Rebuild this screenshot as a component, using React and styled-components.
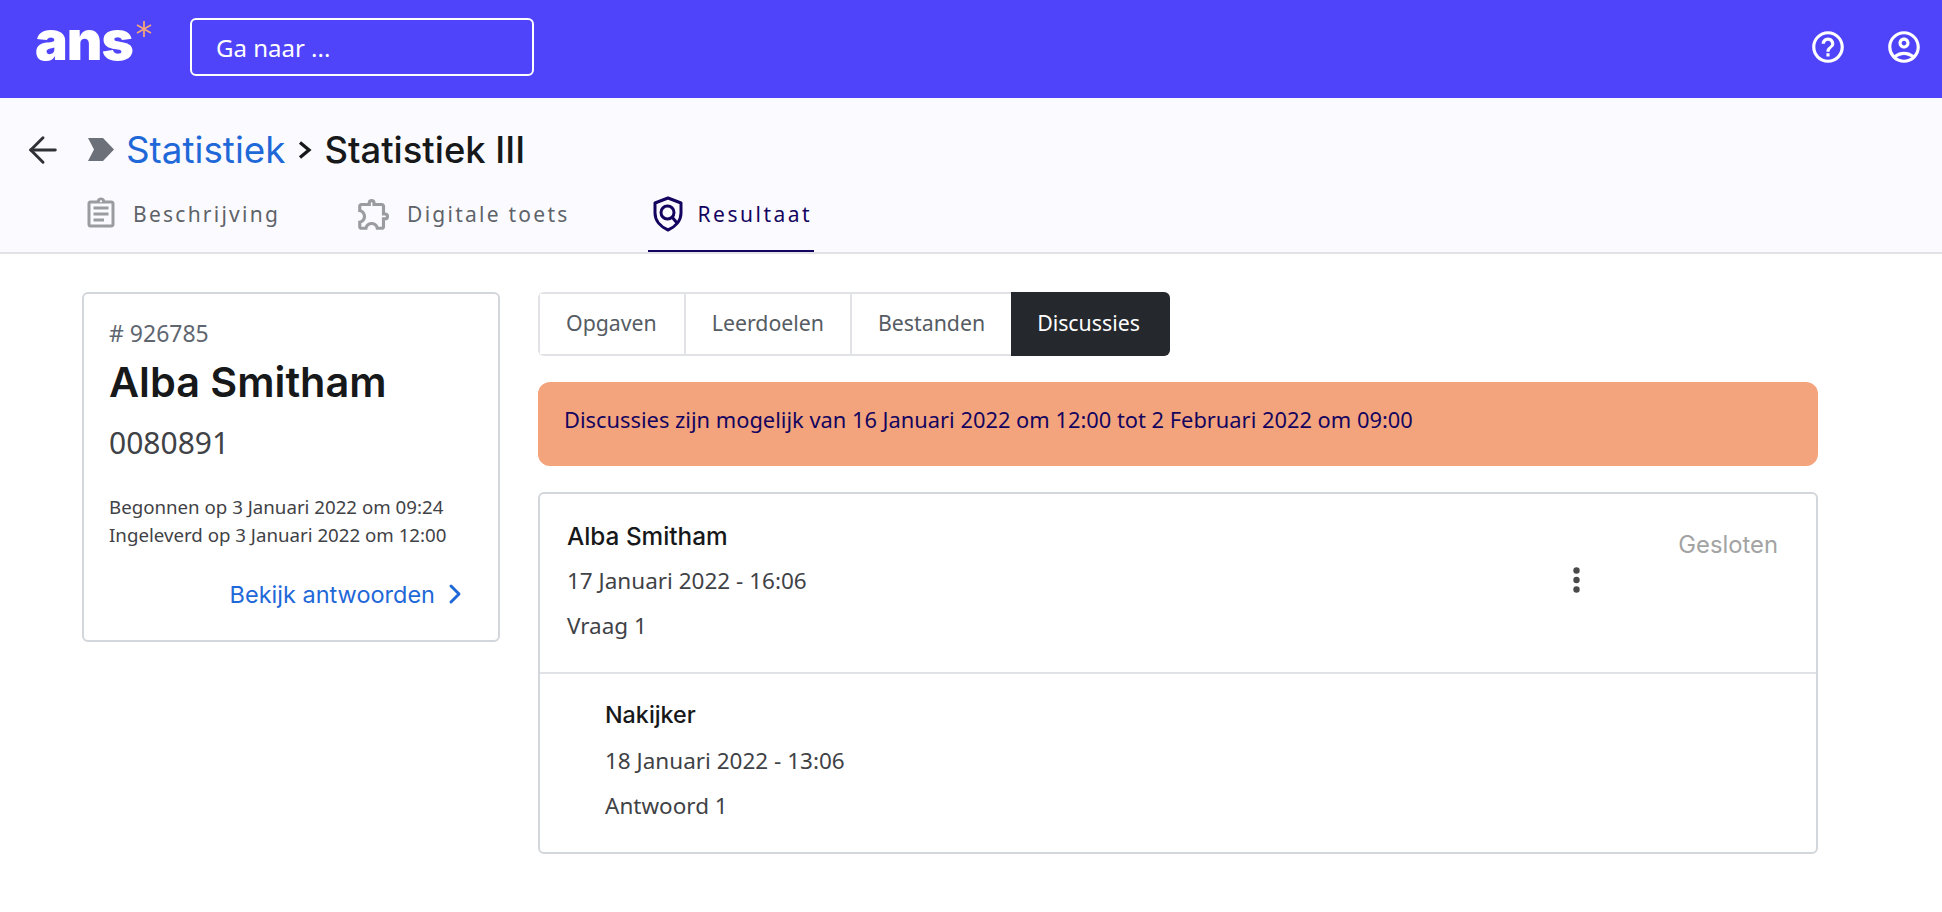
import styled, { createGlobalStyle } from "styled-components";
import { ArrowLeft, ChevronRight } from "lucide-react";
import {
  MdHelpOutline,
  MdOutlineAccountCircle,
  MdOutlineAssignment,
  MdOutlineExtension,
} from "react-icons/md";

const GlobalStyle = createGlobalStyle`
  * { box-sizing: border-box; }
  html, body { margin: 0; background: #fff; }
  body { font-family: "Noto Sans", "Open Sans", sans-serif; color: #3f4246; }
`;

const heading = `"Inter", "Liberation Sans", sans-serif`;

const TopBar = styled.header`
  height: 98px;
  background: #4f44fa;
  display: flex;
  align-items: center;
  padding: 0 19px 4px 35px;
`;

const Logo = styled.div`
  width: 155px;
  height: 58px;
  display: flex;
  align-items: flex-start;
  color: #fff;
  font-family: ${heading};
  font-weight: 900;
  font-size: 55px;
  line-height: 44px;
  letter-spacing: -1px;
`;

const LogoStar = styled.svg`
  margin: 3px 0 0 3px;
`;

const SearchBox = styled.div`
  width: 344px;
  height: 58px;
  border: 2px solid #fff;
  border-radius: 6px;
  color: #fff;
  font-size: 24px;
  display: flex;
  align-items: center;
  padding-left: 24px;
`;

const TopIcons = styled.div`
  margin-left: auto;
  display: flex;
  gap: 38px;
  color: #fff;
`;

const SubHeader = styled.div`
  height: 156px;
  background: #fbfbff;
  border-bottom: 2px solid #e1e2e6;
  padding: 30px 0 0 22px;
`;

const TitleRow = styled.div`
  display: flex;
  align-items: center;
  height: 42px;
  padding-top: 1px;
  color: #2f3136;
`;

const CrumbMark = styled.svg`
  margin: 0 12px 0 23px;
`;

const CrumbArrow = styled.svg`
  margin: 0 12px 0 13px;
`;

const Crumb = styled.span`
  font-family: ${heading};
  font-weight: ${(p) => (p.$link ? 400 : 500)};
  font-size: ${(p) => (p.$link ? "36.800px" : "36.400px")};
  color: ${(p) => (p.$link ? "#1f68d8" : "#17181a")};
`;

const TabRow = styled.nav`
  display: flex;
  gap: 69px;
  margin: 21px 0 0 57px;
`;

const NavTab = styled.div`
  height: 61px;
  padding: 0 2px 13px 4px;
  margin-right: ${(p) => p.$after || 0}px;
  display: flex;
  align-items: center;
  gap: 14px;
  font-size: 21px;
  letter-spacing: ${(p) => (p.$active ? "2.500px" : "2.250px")};
  color: ${(p) => (p.$active ? "#15045f" : "#5e6369")};
  border-bottom: 2px solid ${(p) => (p.$active ? "#15045f" : "transparent")};
`;

const Content = styled.main`
  display: flex;
  align-items: flex-start;
  gap: 38px;
  padding: 38px 0 0 82px;
`;

const Card = styled.section`
  border: 2px solid #d3d6da;
  border-radius: 6px;
  background: #fff;
`;

const StudentCard = styled(Card)`
  width: 418px;
  height: 350px;
  padding: 24px 25px 0;
`;

const StudentNumber = styled.div`
  font-size: 23px;
  line-height: 30px;
  color: #5f6670;
`;

const StudentName = styled.h2`
  margin: 9px 0 0;
  font-family: ${heading};
  font-weight: 600;
  font-size: 41.400px;
  line-height: 50px;
  color: #17181a;
`;

const StudentCode = styled.div`
  margin-top: 17px;
  font-size: 30px;
  line-height: 38px;
`;

const Dates = styled.div`
  margin-top: 31px;
  font-size: 18.700px;
  line-height: 27.500px;
`;

const AnswersLink = styled.a`
  margin: 30px 2px 0 0;
  display: flex;
  justify-content: flex-end;
  align-items: center;
  gap: 4px;
  font-family: ${heading};
  font-size: 23.500px;
  color: #1f68d8;
`;

const Column = styled.div`
  width: 1280px;
`;

const SegmentGroup = styled.div`
  display: inline-flex;
  height: 64px;
  border: 2px solid #e1e2e6;
  border-radius: 6px;
`;

const Segment = styled.div`
  display: flex;
  align-items: center;
  padding: 0 ${(p) => (p.$active ? "30px 0 26px" : p.$first ? "27px 0 26px" : "26px")};
  padding-bottom: 4px;
  font-size: 21.300px;
  color: ${(p) => (p.$active ? "#fff" : "#565c63")};
  background: ${(p) => (p.$active ? "#25282d" : "#fff")};
  border-left: ${(p) => (p.$first || p.$active ? "0" : "2px solid #e1e2e6")};
  ${(p) => p.$active && "margin: -2px -2px -2px 0; border-radius: 0 6px 6px 0;"}
`;

const Notice = styled.div`
  margin-top: 26px;
  height: 84px;
  background: #f3a47c;
  border-radius: 12px;
  color: #15045f;
  font-size: 21.850px;
  line-height: 76px;
  padding-left: 26px;
`;

const DiscussionCard = styled(Card)`
  margin-top: 26px;
  height: 362px;
`;

const Message = styled.div`
  display: flex;
  align-items: flex-start;
  height: 180px;
  padding: ${(p) => (p.$first ? "27px 38px 0 27px" : "26px 38px 0 65px")};
  border-bottom: ${(p) => (p.$first ? "2px solid #e1e2e6" : "0")};
`;

const MessageBody = styled.div`
  flex: 1;
`;

const Author = styled.div`
  margin-bottom: ${(p) => (p.$first ? -1 : 0)}px;
  font-family: ${heading};
  font-weight: 500;
  font-size: ${(p) => (p.$first ? 24.300 : 23.300)}px;
  line-height: 30px;
  color: #17181a;
`;

const MessageLine = styled.div`
  margin-top: 15.500px;
  font-size: 22.500px;
  line-height: 30px;
`;

const MoreButton = styled.svg`
  margin-top: 46px;
`;

const Status = styled.div`
  width: 198px;
  text-align: right;
  margin-top: 9px;
  font-family: ${heading};
  font-size: 23.800px;
  line-height: 30px;
  color: #a3a3a3;
`;

function ShieldIcon() {
  return (
    <svg width="32" height="36" viewBox="0 0 32 36" fill="none">
      <path
        d="M16 2l13 5v10c0 8-6 14-13 17C9 31 3 25 3 17V7z"
        stroke="#15045f"
        strokeWidth="3"
        strokeLinejoin="round"
      />
      <circle cx="15.500" cy="16.500" r="6.500" stroke="#15045f" strokeWidth="3" />
      <path d="M20 21l5 6" stroke="#15045f" strokeWidth="3" />
    </svg>
  );
}

export default function App() {
  return (
    <>
      <GlobalStyle />
      <TopBar>
        <Logo>
          ans
          <LogoStar width="16" height="16" viewBox="0 0 16 16" stroke="#f3a47c" strokeWidth="1.800">
            <path d="M8 0v16M1 4l14 8M15 4L1 12" />
          </LogoStar>
        </Logo>
        <SearchBox>Ga naar ...</SearchBox>
        <TopIcons>
          <MdHelpOutline size={38} />
          <MdOutlineAccountCircle size={38} />
        </TopIcons>
      </TopBar>
      <SubHeader>
        <TitleRow>
          <ArrowLeft size={42} strokeWidth={1.7} />
          <CrumbMark width="27" height="23" viewBox="0 0 27 23">
            <path d="M1 0h15l11 11.500L16 23H1l6-11.500z" fill="#6b7079" />
          </CrumbMark>
          <Crumb $link>Statistiek</Crumb>
          <CrumbArrow width="14" height="18" viewBox="0 0 14 18" fill="none">
            <path d="M2 1.500l9 7.500-9 7.500" stroke="#17181a" strokeWidth="3.300" />
          </CrumbArrow>
          <Crumb>Statistiek III</Crumb>
        </TitleRow>
        <TabRow>
          <NavTab><MdOutlineAssignment size={36} color="#9a9c9f" />Beschrijving</NavTab>
          <NavTab $after={7}><MdOutlineExtension size={38} color="#9a9c9f" />Digitale toets</NavTab>
          <NavTab $active><ShieldIcon />Resultaat</NavTab>
        </TabRow>
      </SubHeader>
      <Content>
        <StudentCard>
          <StudentNumber># 926785</StudentNumber>
          <StudentName>Alba Smitham</StudentName>
          <StudentCode>0080891</StudentCode>
          <Dates>
            Begonnen op 3 Januari 2022 om 09:24
            <br />
            Ingeleverd op 3 Januari 2022 om 12:00
          </Dates>
          <AnswersLink>
            Bekijk antwoorden <ChevronRight size={32} strokeWidth={2.2} />
          </AnswersLink>
        </StudentCard>
        <Column>
          <SegmentGroup>
            <Segment $first>Opgaven</Segment>
            <Segment>Leerdoelen</Segment>
            <Segment>Bestanden</Segment>
            <Segment $active>Discussies</Segment>
          </SegmentGroup>
          <Notice>Discussies zijn mogelijk van 16 Januari 2022 om 12:00 tot 2 Februari 2022 om 09:00</Notice>
          <DiscussionCard>
            <Message $first>
              <MessageBody>
                <Author $first>Alba Smitham</Author>
                <MessageLine>17 Januari 2022 - 16:06</MessageLine>
                <MessageLine>Vraag 1</MessageLine>
              </MessageBody>
              <MoreButton width="7" height="26" viewBox="0 0 7 26" fill="#4a4a4a">
                <circle cx="3.500" cy="3.500" r="3.200" />
                <circle cx="3.500" cy="13" r="3.200" />
                <circle cx="3.500" cy="22.500" r="3.200" />
              </MoreButton>
              <Status>Gesloten</Status>
            </Message>
            <Message>
              <MessageBody>
                <Author>Nakijker</Author>
                <MessageLine>18 Januari 2022 - 13:06</MessageLine>
                <MessageLine>Antwoord 1</MessageLine>
              </MessageBody>
            </Message>
          </DiscussionCard>
        </Column>
      </Content>
    </>
  );
}
